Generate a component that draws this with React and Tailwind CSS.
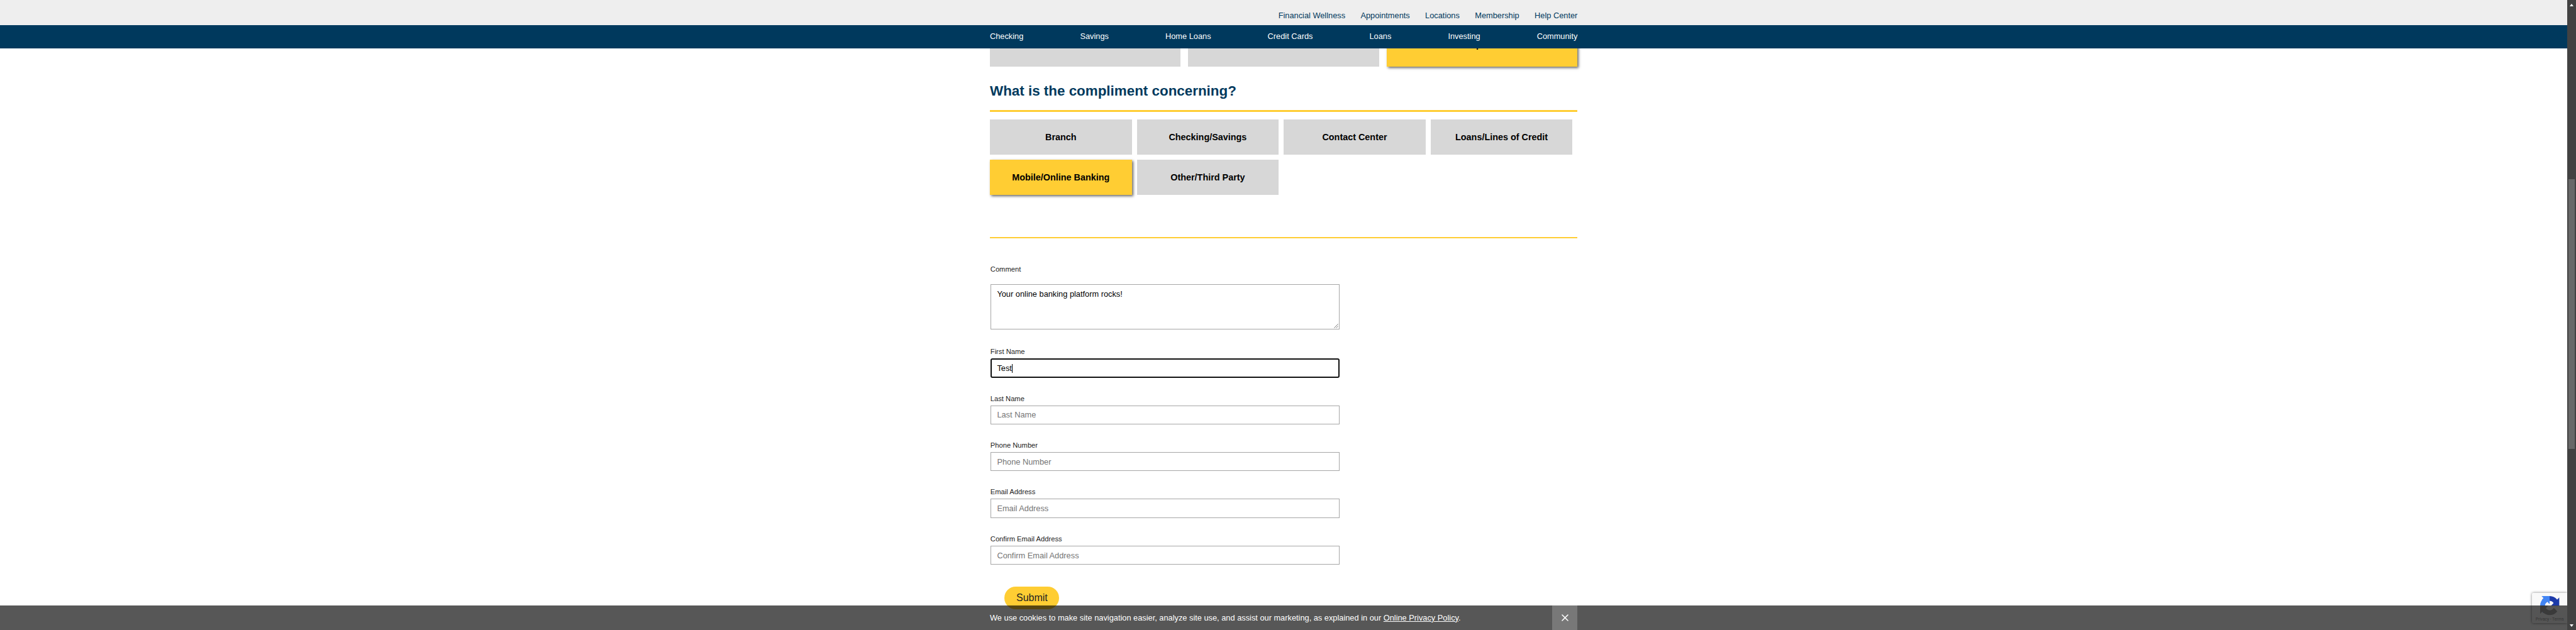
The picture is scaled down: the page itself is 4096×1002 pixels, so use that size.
const utilityLinks = ["Financial Wellness", "Appointments", "Locations", "Membership", "Help Center"];
const mainLinks = ["Checking", "Savings", "Home Loans", "Credit Cards", "Loans", "Investing", "Community"];
const topics = [
  "Branch",
  "Checking/Savings",
  "Contact Center",
  "Loans/Lines of Credit",
  "Mobile/Online Banking",
  "Other/Third Party",
];
const emptyFields = ["Last Name", "Phone Number", "Email Address", "Confirm Email Address"];

const SELECTED = "bg-[#ffcd33] shadow-[1.6px_1.6px_4px_rgba(0,0,0,0.6)]";

function Header() {
  return (
    <header className="relative z-10 w-full">
      <div className="flex h-[40px] justify-center bg-[#eeeeee]">
        <div className="flex w-[934.4px] justify-end gap-[24.4px] pt-[14.8px]">
          {utilityLinks.map((t) => (
            <a key={t} className="text-[12.8px] leading-[19.2px] text-[#00395d]">{t}</a>
          ))}
        </div>
      </div>
      <nav className="flex h-[36.8px] justify-center bg-[#00395d]">
        <div className="flex w-[934.4px] justify-between pt-[7.6px]">
          {mainLinks.map((t) => (
            <a key={t} className="text-[12.8px] leading-[19.2px] text-white">{t}</a>
          ))}
        </div>
      </nav>
    </header>
  );
}

function Label({ children }) {
  return <label className="block text-[11.2px] leading-[16px] text-[#222222]">{children}</label>;
}

function Form() {
  return (
    <form className="ml-[0.8px] mt-[40.9px] w-[555.2px]">
      <Label>Comment</Label>
      <div className="relative mt-[15.9px] h-[72px] border border-[#a6a6a6] bg-white px-[9.6px] pt-[4.6px] text-[12.8px] leading-[19.2px] text-black">
        Your online banking platform rocks!
        <svg className="absolute bottom-px right-px h-[7px] w-[7px]" viewBox="0 0 7 7" fill="none" stroke="#555" strokeWidth="0.8">
          <path d="M0.3 6.7 6.7 0.3M3.5 6.7 6.7 3.5" />
        </svg>
      </div>
      <div className="mt-[27.3px]">
        <Label>First Name</Label>
        <div className="mt-[3.1px] flex h-[30.4px] items-center rounded-[3px] border-2 border-[#101010] bg-white px-[8.6px] text-[12.8px] text-black">
          <span className="leading-[18px]">Test</span>
          <span className="h-[14px] w-px bg-black" />
        </div>
      </div>
      {emptyFields.map((name) => (
        <div key={name} className="mt-[24.9px]">
          <Label>{name}</Label>
          <input
            readOnly
            placeholder={name}
            className="mt-[3.1px] block h-[30.4px] w-full border border-[#a6a6a6] bg-white px-[9.6px] text-[12.8px] placeholder:text-[#757575] placeholder:opacity-100"
          />
        </div>
      ))}
      <button type="button" className="ml-[22.6px] mt-[35.2px] block h-[36px] w-[87px] rounded-[18px] bg-[#ffcd33] text-[16px] leading-[24px] text-[#222222]">
        Submit
      </button>
    </form>
  );
}

function RecaptchaBadge() {
  return (
    <div className="absolute bottom-[10.8px] right-0 h-[48px] w-[56.4px] rounded-l-[2px] bg-[#f9f9f9] shadow-[0_0_4px_#808080]">
      <svg className="ml-[13.2px] mt-[5px] h-[30.4px] w-[30.4px]" viewBox="0 0 64 64">
        <path fill="#1c3aa9" d="M64 31.955l-.033-1.37V4.687l-7.16 7.16C50.948 4.674 42.033.093 32.05.093c-10.4 0-19.622 4.96-25.458 12.64l11.736 11.86a15.55 15.55 0 0 1 4.754-5.334c2.05-1.6 4.952-2.906 8.968-2.906.485 0 .86.057 1.135.163 4.976.393 9.288 3.14 11.828 7.124l-8.307 8.307L64 31.953" />
        <path fill="#4285f4" d="M31.862.094l-1.37.033H4.594l7.16 7.16C4.58 13.147 0 22.06 0 32.046c0 10.4 4.96 19.622 12.64 25.458L24.5 45.768a15.55 15.55 0 0 1-5.334-4.754c-1.6-2.05-2.906-4.952-2.906-8.968 0-.485.057-.86.163-1.135.393-4.976 3.14-9.288 7.124-11.828l8.307 8.307L31.86.095" />
        <path fill="#ababab" d="M.001 32.045l.033 1.37v25.898l7.16-7.16c5.86 7.173 14.774 11.754 24.76 11.754 10.4 0 19.622-4.96 25.458-12.64l-11.736-11.86a15.55 15.55 0 0 1-4.754 5.334c-2.05 1.6-4.952 2.906-8.968 2.906-.485 0-.86-.057-1.135-.163-4.976-.393-9.288-3.14-11.828-7.124l8.307-8.307c-10.522.04-22.4.066-27.295-.005" />
      </svg>
      <div className="ml-[5.8px] mt-[2px] whitespace-nowrap font-[Roboto,sans-serif] text-[6.6px] leading-[8px] text-[#999999]">Privacy - Terms</div>
    </div>
  );
}

function CookieBar() {
  return (
    <div className="absolute bottom-0 left-0 z-20 flex h-[38.8px] w-full justify-center bg-black/[0.66]">
      <div className="flex w-[934.4px] justify-between">
        <p className="pt-[9.4px] text-[12.8px] leading-[19.2px] text-white">
          We use cookies to make site navigation easier, analyze site use, and assist our marketing, as explained in our{" "}
          <a className="underline">Online Privacy Policy</a>.
        </p>
        <div className="flex w-[40px] items-center justify-center bg-white/20">
          <svg className="h-[11px] w-[11px]" viewBox="0 0 11 11" stroke="#fff" strokeWidth="1.6" strokeLinecap="round">
            <path d="M1 1 10 10M10 1 1 10" />
          </svg>
        </div>
      </div>
    </div>
  );
}

function Scrollbar() {
  return (
    <div className="flex h-full w-[13.6px] flex-col items-center bg-[#424242]">
      <svg className="mt-[5.6px] h-[4px] w-[6px]" viewBox="0 0 6 4"><path fill="#fff" d="M3 0 6 4H0z" /></svg>
      <div className="mt-[275.2px] h-[429.6px] w-[10.4px] bg-[#686868]" />
      <svg className="mb-[4.8px] mt-auto h-[4px] w-[6px]" viewBox="0 0 6 4"><path fill="#fff" d="M0 0H6L3 4z" /></svg>
    </div>
  );
}

export default function App() {
  return (
    <div className="flex h-[1002px] w-[4096px] overflow-hidden bg-white font-['Liberation_Sans',Arial,sans-serif]">
      <div className="relative h-full flex-1 overflow-hidden">
        <Header />
        <main className="mx-auto w-[934.4px]">
          <div className="-mt-[43.2px] grid h-[72px] grid-cols-3 gap-[12px]">
            <div className="bg-[#d7d7d7]" />
            <div className="bg-[#d7d7d7]" />
            <div className={"flex items-center justify-center pt-[2px] text-[14.4px] font-bold leading-[20px] text-black " + SELECTED}>
              Compliment
            </div>
          </div>
          <h2 className="mt-[23.4px] text-[22.4px] font-bold leading-[32px] text-[#00395d]">What is the compliment concerning?</h2>
          <div className="mt-[14.2px] h-[2.4px] bg-[#ffcd33]" />
          <div className="mt-[12.8px] grid w-[926.4px] grid-cols-4 gap-[8px]">
            {topics.map((t) => (
              <div
                key={t}
                className={
                  "flex h-[56px] items-center justify-center text-[14.4px] font-bold leading-[20px] text-black " +
                  (t === "Mobile/Online Banking" ? SELECTED : "bg-[#d7d7d7]")
                }
              >
                {t}
              </div>
            ))}
          </div>
          <div className="mt-[66.4px] h-[2.4px] bg-[#ffcd33]" />
          <Form />
        </main>
        <RecaptchaBadge />
        <CookieBar />
      </div>
      <Scrollbar />
    </div>
  );
}
